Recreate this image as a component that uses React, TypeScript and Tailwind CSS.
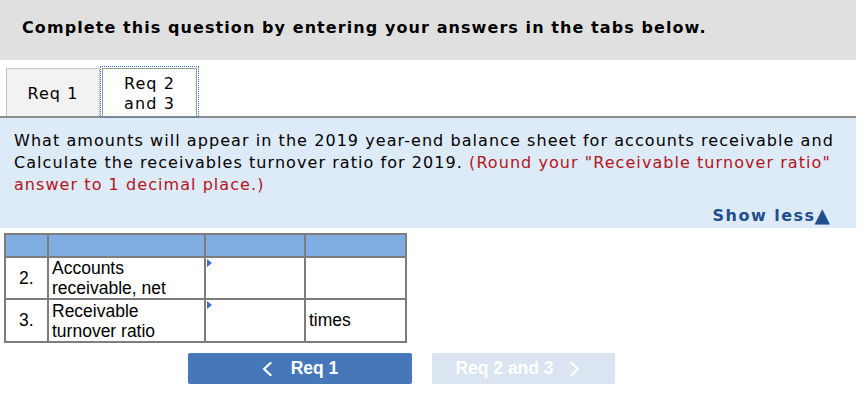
const verdana = "font-['DejaVu_Sans',Verdana,sans-serif]";
const arial = "font-['Liberation_Sans',Arial,sans-serif]";

function Marker() {
  return (
    <span
      aria-hidden
      className="absolute left-[1px] top-[1px] h-0 w-0 border-y-[4px] border-l-[5px] border-y-transparent border-l-[#3b73c4]"
    />
  );
}

function Chevron({ dir }: { dir: "left" | "right" }) {
  return (
    <svg width="10" height="14" viewBox="0 0 10 14" fill="none" aria-hidden>
      <polyline
        points={dir === "left" ? "8.5,1 2,7 8.5,13" : "1.5,1 8,7 1.5,13"}
        stroke="currentColor"
        strokeWidth="2.2"
        strokeLinecap="round"
        strokeLinejoin="round"
      />
    </svg>
  );
}

const rows = [
  { n: "2.", label: ["Accounts", "receivable, net"], unit: "", h: "h-[41px]" },
  { n: "3.", label: ["Receivable", "turnover ratio"], unit: "times", h: "h-[43px]" },
];

export default function App() {
  return (
    <div className={`w-[856px] bg-white text-black ${verdana}`}>
      <div className="flex h-[60px] items-center bg-[#e0e0e0] pl-[22px] pb-[5px] text-[16px] font-bold tracking-[1.08px]">
        Complete this question by entering your answers in the tabs below.
      </div>

      <div className="flex items-end border-b-2 border-[#8c8c8c] pl-[6px] pt-[8px] text-[16px] tracking-[1.1px]">
        <button className="flex h-[48px] w-[94px] items-center justify-center border border-b-0 border-[#c6c6c6] bg-[#f2f2f2] pt-[2px]">
          Req 1
        </button>
        <button className="ml-[2px] flex h-[48px] w-[95px] flex-col items-center justify-center border border-b-0 border-[#9a9a9a] bg-white pt-[3px] leading-[20px] outline outline-1 outline-offset-1 outline-dotted outline-[#3f78c6]">
          <span>Req 2</span>
          <span>and 3</span>
        </button>
      </div>

      <div className="bg-[#ddeaf7] px-[14px] pt-[12px] pb-[1px] text-[16px] leading-[22px] tracking-[1.06px] whitespace-nowrap">
        <p>
          What amounts will appear in the 2019 year-end balance sheet for accounts receivable and
          <br />
          Calculate the receivables turnover ratio for 2019.{" "}
          <span className="text-[#b3131b]">
            (Round your "Receivable turnover ratio"
            <br />
            answer to 1 decimal place.)
          </span>
        </p>
        <div className="mt-[9px] flex justify-end pr-[12px]">
          <span className="flex items-center text-[16px] font-bold tracking-[1.5px] text-[#214d8a]">
            Show less
            <span className="-ml-[1px] -mt-[3px] text-[20px] leading-[22px] tracking-normal">▲</span>
          </span>
        </div>
      </div>

      <table className={`ml-[4px] mt-[5px] border-collapse text-[17.5px] ${arial}`}>
        <tbody>
          <tr className="h-[23px] bg-[#80aee2]">
            <td className="w-[43px] border-2 border-[#7d7d7d]" />
            <td className="w-[157px] border-2 border-[#7d7d7d]" />
            <td className="w-[100px] border-2 border-[#7d7d7d]" />
            <td className="w-[101px] border-2 border-[#7d7d7d]" />
          </tr>
          {rows.map((r) => (
            <tr key={r.n} className={r.h}>
              <td className="border-2 border-[#7d7d7d] pl-[13px] align-middle">{r.n}</td>
              <td className="border-2 border-[#7d7d7d] px-[3px] align-middle leading-[20px]">
                {r.label[0]}
                <br />
                {r.label[1]}
              </td>
              <td className="relative border-2 border-[#7d7d7d]">
                <Marker />
              </td>
              <td className="border-2 border-[#7d7d7d] px-[3px] align-middle">{r.unit}</td>
            </tr>
          ))}
        </tbody>
      </table>

      <div className={`ml-[188px] mt-[10px] flex gap-[20px] pb-[31px] ${arial}`}>
        <button className="flex h-[31px] w-[224px] items-center justify-center gap-[19px] rounded-[2px] bg-[#4677b8] text-[17.5px] font-bold text-white">
          <Chevron dir="left" />
          Req 1
        </button>
        <button className="flex h-[31px] w-[183px] items-center justify-center gap-[16px] rounded-[2px] bg-[#dbe4f1] pr-[12px] text-[17.5px] font-bold text-white">
          Req 2 and 3
          <Chevron dir="right" />
        </button>
      </div>
    </div>
  );
}
